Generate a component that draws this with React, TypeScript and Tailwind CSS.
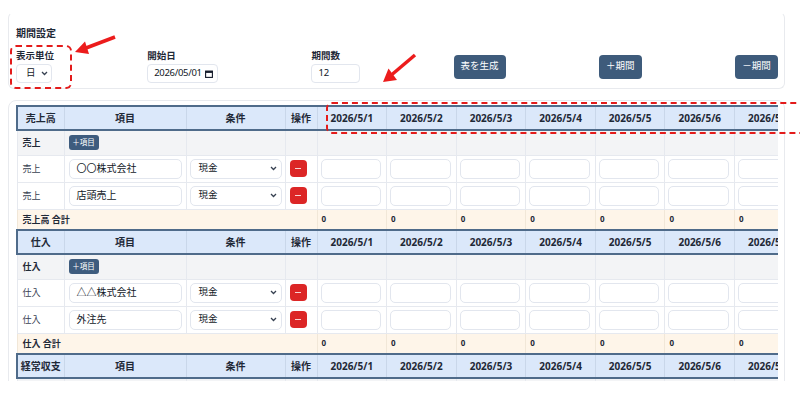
import React from 'react';

const dates = Array.from({ length: 12 }, (_, i) => `2026/5/${i + 1}`);

interface Section {
  title: string;
  label: string;
  rows: string[];
}

const sections: Section[] = [
  { title: '売上高', label: '売上', rows: ['〇〇株式会社', '店頭売上'] },
  { title: '仕入', label: '仕入', rows: ['△△株式会社', '外注先'] },
  { title: '経常収支', label: '経常収支', rows: [] },
];

const Chevron = () => (
  <svg width="7" height="5" viewBox="0 0 7 5" fill="none">
    <path d="M1 1l2.5 2.5L6 1" stroke="#374151" strokeWidth="1.3" />
  </svg>
);

const AddItemButton = () => (
  <button className="flex h-[15px] w-[30px] items-center justify-center rounded-[3px] bg-[#3e5c7e] text-[7.5px] text-white">
    ＋項目
  </button>
);

const SectionRows: React.FC<{ section: Section }> = ({ section }) => {
  const th =
    'border-x border-x-[#c9d7ea] border-y-2 border-y-[#4f6b8a] bg-[#dbe8fa] text-center text-[10px] font-bold text-[#1f2937]';
  return (
    <>
      <tr className="h-[24px]">
        <th className={`${th} border-l-2 border-l-[#4f6b8a]`}>{section.title}</th>
        <th className={th}>項目</th>
        <th className={th}>条件</th>
        <th className={th}>操作</th>
        {dates.map((d) => (
          <th key={d} className={th}>
            {d}
          </th>
        ))}
      </tr>
      <tr className="h-[25px] bg-[#f3f4f6]">
        <td className="border border-[#e6e9ef] pl-[5px] text-[9px] font-bold text-[#1f2937]">
          {section.label}
        </td>
        <td className="border border-[#e6e9ef] pl-[4px]">
          <AddItemButton />
        </td>
        <td className="border border-[#e6e9ef]" />
        <td className="border border-[#e6e9ef]" />
        {dates.map((d) => (
          <td key={d} className="border border-[#e6e9ef]" />
        ))}
      </tr>
      {section.rows.map((name) => (
        <tr key={name} className="h-[27px] bg-white">
          <td className="border border-[#e6e9ef] pl-[5px] text-[9px] text-[#374151]">
            {section.label}
          </td>
          <td className="border border-[#e6e9ef] px-[4px]">
            <div className="flex h-[20px] items-center rounded-[5px] border border-[#e2e6ee] bg-white pl-[7px] text-[10px] text-[#111827]">
              {name}
            </div>
          </td>
          <td className="border border-[#e6e9ef] px-[3px]">
            <div className="flex h-[20px] items-center justify-between rounded-[5px] border border-[#e2e6ee] bg-white pl-[8px] pr-[4px] text-[9.5px] text-[#111827]">
              <span>現金</span>
              <Chevron />
            </div>
          </td>
          <td className="border border-[#e6e9ef] pl-[4px]">
            <div className="flex h-[17px] w-[17px] items-center justify-center rounded-[4px] bg-[#dc2626]">
              <span className="h-[1.5px] w-[6px] bg-white/80" />
            </div>
          </td>
          {dates.map((d) => (
            <td key={d} className="border border-[#e6e9ef] pl-[3px] pr-[5px]">
              <div className="h-[20px] rounded-[5px] border border-[#e2e6ee] bg-white" />
            </td>
          ))}
        </tr>
      ))}
      {section.rows.length > 0 && (
        <tr className="h-[21px] bg-[#fef5e9]">
          <td colSpan={4} className="border border-[#f1e7d8] pl-[5px] text-[9px] font-bold text-[#1f2937]">
            {section.title} 合計
          </td>
          {dates.map((d) => (
            <td key={d} className="border border-[#f1e7d8] pl-[4px] text-[8px] font-bold text-[#1f2937]">
              0
            </td>
          ))}
        </tr>
      )}
    </>
  );
};

const Field: React.FC<{ label: string; children: React.ReactNode }> = ({ label, children }) => (
  <div className="flex flex-col gap-[2px]">
    <span className="text-[9.5px] leading-[12px] font-bold text-[#1f2937]">{label}</span>
    {children}
  </div>
);

const ActionButton: React.FC<{ label: string; w: string }> = ({ label, w }) => (
  <button className={`flex h-[24px] ${w} items-center justify-center rounded-[4px] bg-[#3e5b7b] text-[9.5px] text-white`}>
    {label}
  </button>
);

export default function App() {
  return (
    <div className="relative h-[400px] w-[800px] overflow-hidden bg-white font-['Noto_Sans','Noto_Sans_CJK_JP',sans-serif]">
      <div className="h-[381px] overflow-hidden pl-[8px] pt-[12px]">
        {/* Period settings */}
        <div className="w-[777px] rounded-md border border-[#e8eaee] border-t-transparent pb-[5px] pl-[7px] pr-[6px] pt-[13px]">
          <h2 className="text-[10px] leading-[14px] font-bold text-[#1f2937]">期間設定</h2>
          <div className="mt-[10px] flex items-center justify-between">
            <Field label="表示単位">
              <div className="flex h-[19px] w-[36px] items-center justify-between rounded-[4px] border border-[#e2e6ee] pl-[9px] pr-[3px] text-[9.5px] text-[#111827]">
                <span>日</span>
                <Chevron />
              </div>
            </Field>
            <Field label="開始日">
              <div className="flex h-[19px] w-[71px] items-center justify-between rounded-[4px] border border-[#e2e6ee] pl-[6px] pr-[4px] text-[9.5px] text-[#111827]">
                <span className="tracking-[-0.3px]">2026/05/01</span>
                <svg width="8" height="8" viewBox="0 0 8 8" fill="none">
                  <rect x="0.6" y="1.1" width="6.8" height="6.3" stroke="#111827" strokeWidth="1.1" />
                  <rect x="0.6" y="1.1" width="6.8" height="1.8" fill="#111827" />
                </svg>
              </div>
            </Field>
            <Field label="期間数">
              <div className="flex h-[19px] w-[49px] items-center rounded-[4px] border border-[#e2e6ee] pl-[6px] text-[9.5px] text-[#111827]">
                12
              </div>
            </Field>
            <ActionButton label="表を生成" w="w-[52px]" />
            <ActionButton label="＋期間" w="w-[43px]" />
            <ActionButton label="－期間" w="w-[43px]" />
          </div>
        </div>

        {/* Table */}
        <div className="mt-[11px] w-[777px] rounded-lg border border-[#e8eaee] pl-[7px] pr-[6px] pt-[4px]">
          <div className="overflow-hidden">
            <table className="w-[1135px] table-fixed border-collapse">
              <colgroup>
                <col className="w-[47px]" />
                <col className="w-[122px]" />
                <col className="w-[99px]" />
                <col className="w-[32px]" />
                {dates.map((d) => (
                  <col key={d} className="w-[69.6px]" />
                ))}
              </colgroup>
              <tbody>
                {sections.map((s) => (
                  <SectionRows key={s.title} section={s} />
                ))}
              </tbody>
            </table>
          </div>
        </div>
      </div>

      {/* Annotations */}
      <div className="pointer-events-none absolute left-[10px] top-[45px] h-[44px] w-[62px] rounded-[6px] border-2 border-dashed border-[#e31b1b]" />
      <div className="pointer-events-none absolute left-[326px] top-[102px] h-[32px] w-[500px] rounded-[6px] border-2 border-dashed border-[#e31b1b]" />
      <svg className="pointer-events-none absolute left-0 top-0" width="800" height="400">
        <line x1="115" y1="37" x2="86" y2="48" stroke="#ec1c1c" strokeWidth="3.5" />
        <polygon points="75,52 89,54 85,41.5" fill="#ec1c1c" />
        <line x1="415" y1="55" x2="392" y2="74.5" stroke="#ec1c1c" strokeWidth="3.5" />
        <polygon points="383,82 397,80 388.5,68.5" fill="#ec1c1c" />
      </svg>
    </div>
  );
}
